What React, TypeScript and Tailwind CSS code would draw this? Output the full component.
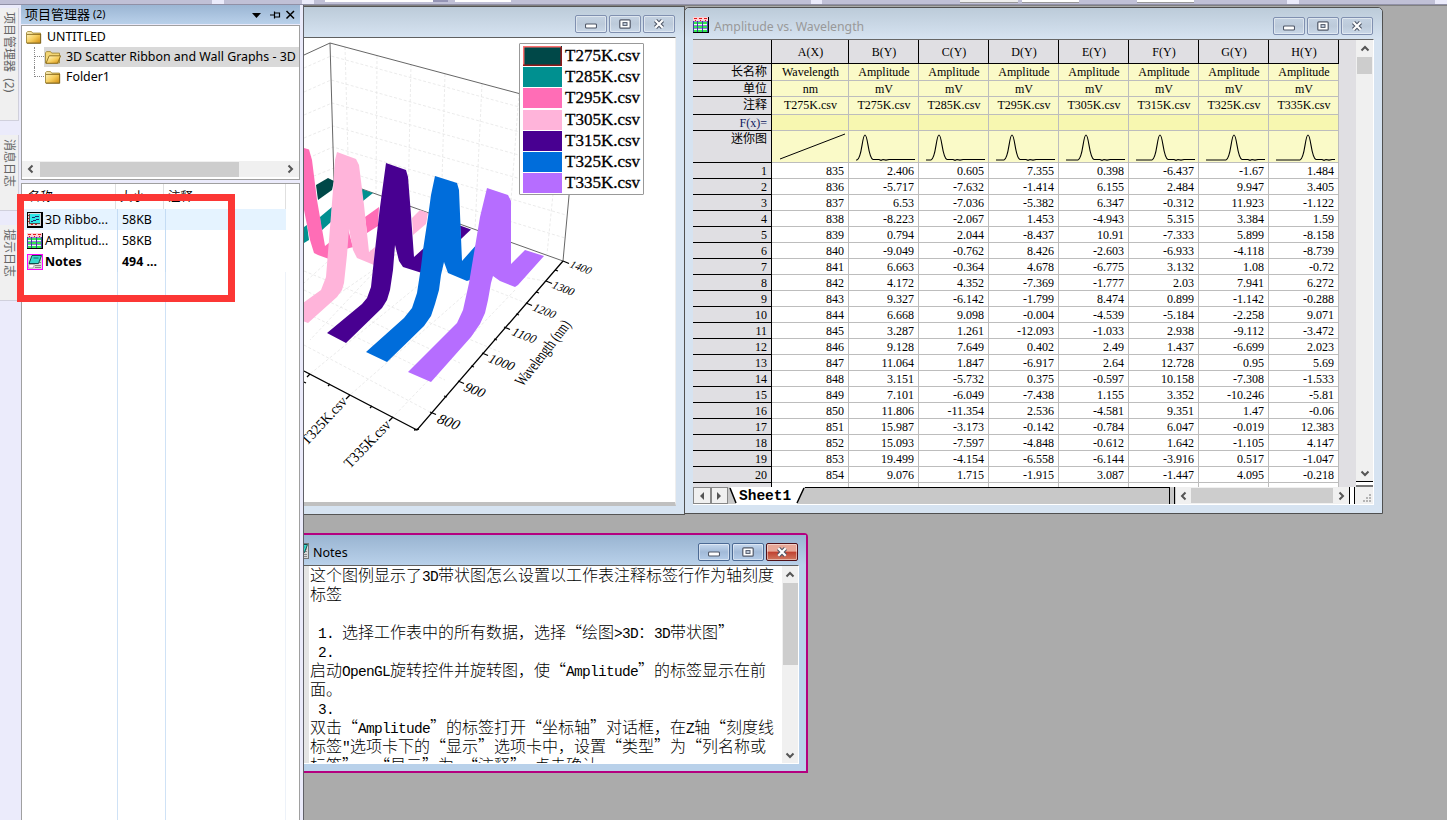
import React from 'react';

const UI = "font-['Noto_Sans','Noto_Sans_CJK_SC',sans-serif]";
const SERIF = "font-['Liberation_Serif','Noto_Sans_CJK_SC',serif]";

function GraphIcon() {
  return (
    <svg viewBox="0 0 16 16" className="h-4 w-4 shrink-0" shapeRendering="crispEdges">
      <rect width="16" height="16" fill="#000" />
      <rect x="1" y="1" width="13" height="13" fill="#d8d8d8" />
      <rect x="3" y="2" width="10" height="9" fill="#30e8e8" />
      <path d="M2.500 2v9.500H13" stroke="#505050" fill="none" />
      <path d="M5 5.500h3M8 4.500h4M4 9.500h2M6 8.500h3M9 7.500h3" stroke="#1a2b70" fill="none" />
      <path d="M1 3.500h1M1 6.500h1M1 9.500h1M4 12.500h2M8 12.500h2" stroke="#d02020" />
    </svg>
  );
}

function SheetIcon() {
  return (
    <svg viewBox="0 0 16 16" className="h-4 w-4 shrink-0" shapeRendering="crispEdges">
      <rect width="16" height="16" fill="#000" />
      <rect width="15" height="15" fill="#e8fff0" />
      <path d="M1 6h13M1 10h13M1 13.500h13" stroke="#30e850" strokeWidth="2" />
      <rect width="15" height="4" fill="#ffd0d4" />
      <path d="M1 1.500h3M6 1.500h3M11 1.500h3M2 3.500h1M7 3.500h1M12 3.500h1" stroke="#e01818" />
      <path d="M0 4.500h15M0 8.500h15M0 11.500h15" stroke="#9a78d8" />
      <path d="M.5 4v11M4.500 4v11M9.500 4v11M14.500 4v11" stroke="#4040a0" />
    </svg>
  );
}

function NotesIcon({ boxed }: { boxed?: boolean }) {
  return (
    <svg viewBox="0 0 16 16" className="h-4 w-4 shrink-0">
      <rect x=".5" y=".5" width="15" height="15" fill="#d8d8d8" stroke={boxed ? '#f0f' : '#777'} />
      <path d="M8 11.500h6M8 13.500h6M12 6h2M12 8.500h2" stroke="#888" />
      <path d="M5 1.500h9.500l-3 8H2z" fill="#38d8cc" stroke="#083c3c" strokeWidth=".9" />
      <path d="M6.500 4h5" stroke="#106060" strokeWidth=".9" />
      <path d="M2 10.500h5.500L6 14H1.500z" fill="#fff" stroke="#999" strokeWidth=".7" />
    </svg>
  );
}

function Folder({ open, id }: { open?: boolean; id: string }) {
  return (
    <svg viewBox="0 0 16 13" className="h-[13px] w-4 shrink-0">
      <defs>
        <linearGradient id={id} x1="0" y1="0" x2="1" y2="1">
          <stop offset="0" stopColor="#fffbd0" />
          <stop offset=".55" stopColor="#f6cd5c" />
          <stop offset="1" stopColor="#d08c10" />
        </linearGradient>
      </defs>
      <path d="M.5 12V1.800L1.500.6h4l1.200 1.500h7.800V12z" fill={open ? '#f3d676' : `url(#${id})`} stroke="#a08838" strokeWidth=".9" />
      {open ? (
        <path d="M1 12.300 4.200 4.800h11.400L12.600 12.300z" fill={`url(#${id})`} stroke="#8a6a18" strokeWidth=".9" />
      ) : (
        <path d="M1 3.400h13.500M14.700 3v9.300H1" fill="none" stroke="#7a5a10" strokeWidth=".8" />
      )}
    </svg>
  );
}

function Chevron({ dir, className = '' }: { dir: 'l' | 'r' | 'u' | 'd'; className?: string }) {
  const d = { l: 'M6.500 1.500 3 5l3.500 3.500', r: 'M3.500 1.500 7 5 3.500 8.500', u: 'M1.500 6.500 5 3l3.500 3.500', d: 'M1.500 3.500 5 7l3.500-3.500' }[dir];
  return (
    <svg viewBox="0 0 10 10" className={'h-[10px] w-[10px] shrink-0 ' + className}>
      <path d={d} fill="none" stroke="#555" strokeWidth="2" />
    </svg>
  );
}

function WinButtons({ active }: { active?: boolean }) {
  const face = active
    ? 'border-[#4c6a94] bg-linear-to-b from-[#c6d8ee] via-[#a2bad8] to-[#b4cce8]'
    : 'border-[#8090b0] bg-linear-to-b from-[#c4d2e2] via-[#bccada] to-[#cad8e8]';
  const base = 'flex h-[18px] w-8 items-center justify-center rounded-[2px] border shadow-[inset_0_0_0_1px_rgba(255,255,255,.45)] ';
  return (
    <div className="flex gap-[2px]">
      <div className={base + face}>
        <svg viewBox="0 0 12 10" className="h-[10px] w-3"><rect x=".5" y="5" width="11" height="4" rx="1" fill="#fff" stroke="#505868" strokeWidth="1.100" /></svg>
      </div>
      <div className={base + face}>
        <svg viewBox="0 0 12 10" className="h-[10px] w-3"><rect x=".8" y=".8" width="10.400" height="8.400" rx="1" fill="#fff" stroke="#505868" strokeWidth="1.200" /><rect x="4" y="3.600" width="4" height="2.800" fill="#c8d4e4" stroke="#505868" /></svg>
      </div>
      <div className={base + (active ? 'border-[#501018] bg-linear-to-b from-[#e8a898] from-45% via-[#c04030] via-50% to-[#d07860]' : face)}>
        <svg viewBox="0 0 12 10" className="h-[10px] w-3">
          <path d="M2.500 1.500 9.500 8.500M9.500 1.500 2.500 8.500" stroke="#505868" strokeWidth="4.300" />
          <path d="M2.300 1.300 9.700 8.700M9.700 1.300 2.300 8.700" stroke="#fff" strokeWidth="2.200" />
        </svg>
      </div>
    </div>
  );
}

function TopStrip() {
  return (
    <div className="flex h-[5px] w-full items-start overflow-hidden border-b border-[#9090a6] bg-[#c0c0d6]">
      <div className="ml-[212px] h-1 w-3 bg-[#ebebfb]" />
      <div className="ml-[78px] h-1 w-3 bg-[#ebebfb]" />
      <div className="ml-[11px] h-[2px] w-[108px] bg-white" />
      <div className="h-[2px] w-[15px] bg-[#9494b4]" />
      <div className="ml-[7px] h-[2px] w-[56px] bg-white" />
      <div className="ml-[300px] h-1 w-3 bg-[#ebebfb]" />
      <div className="ml-[138px] h-[3px] w-[58px] border-b border-[#999] bg-[#eee]" />
      <div className="ml-1 h-[3px] w-[57px] border-b border-[#999] bg-white" />
      <div className="ml-[58px] h-[3px] w-[57px] border-b border-[#999] bg-white" />
      <div className="ml-[93px] h-1 w-3 bg-[#ebebfb]" />
      <div className="ml-[136px] h-1 w-3 bg-[#ebebfb]" />
    </div>
  );
}

function DockTabs() {
  const tab = 'flex w-[19px] items-center border-r border-b border-[#d0d0dc] bg-[#f0f0f0] text-[12px] leading-none text-[#666] [writing-mode:vertical-rl] [text-orientation:sideways] whitespace-pre pt-1 pr-px ';
  return (
    <div className={'flex h-full w-[21px] shrink-0 flex-col bg-[#ebebfb] ' + UI}>
      <div className={tab + 'mt-[3px] h-[113px]'}>项目管理器  (2)</div>
      <div className={tab + 'mt-[14px] h-[76px]'}>消息日志</div>
      <div className={tab + 'mt-[14px] h-[76px]'}>提示日志</div>
    </div>
  );
}

const files = [
  { name: '3D Ribbo...', size: '58KB', icon: <GraphIcon />, row: 'bg-[#e5f3ff]' },
  { name: 'Amplitud...', size: '58KB', icon: <SheetIcon />, row: '' },
  { name: 'Notes', size: '494 ...', icon: <NotesIcon boxed />, row: 'font-bold' },
];

function ProjectPanel() {
  return (
    <div className={'flex h-full w-[283px] shrink-0 flex-col border-r border-[#606068] bg-[#ebebfb] pr-[3px] text-[12.400px] text-black ' + UI}>
      <div className="flex h-[19px] items-center bg-linear-to-b from-[#9bb5d3] to-[#b9d1ea] pr-[4px] pl-1">
        <span className="text-[13px]">项目管理器</span>
        <span className="ml-[3px] flex-1 text-[10.500px]">(2)</span>
        <svg viewBox="0 0 46 12" className="h-3 w-[46px]">
          <path d="M2 4h9l-4.500 5z" fill="#000" />
          <path d="M20 6h4M24.500 2.500v7M25 4h4.500v4H25" fill="none" stroke="#000" strokeWidth="1.200" />
          <path d="M36.500 2 44 9.500M44 2 36.500 9.500" stroke="#000" strokeWidth="1.500" />
        </svg>
      </div>
      <div className="mt-[1px] flex h-[155px] flex-col border border-[#a0a0a0] bg-white pt-[1px]">
        <div className="flex h-5 items-center gap-[5px] pl-[4px]"><Folder id="f1" />UNTITLED</div>
        <div className="flex h-5">
          <div className="ml-3 w-[10px] border-l border-dotted border-[#888]"><div className="h-[10px] border-b border-dotted border-[#888]" /></div>
          <div className="flex flex-1 items-center gap-[5px] overflow-hidden bg-[#d9d9d9] pl-px whitespace-nowrap"><Folder open id="f2" />3D Scatter Ribbon and Wall Graphs - 3D</div>
        </div>
        <div className="flex h-5">
          <div className="ml-3 w-[10px]"><div className="h-[10px] border-b border-l border-dotted border-[#888]" /></div>
          <div className="flex items-center gap-[5px] pl-px"><Folder id="f3" />Folder1</div>
        </div>
        <div className="flex-1" />
        <div className="mb-[2px] flex h-4 items-center bg-[#f0f0f0] px-1">
          <Chevron dir="l" />
          <div className="ml-1 h-[15px] w-[199px] bg-[#cdcdcd]" />
          <div className="flex-1" />
          <Chevron dir="r" />
        </div>
      </div>
      <div className="mt-[3px] flex flex-1 flex-col border border-b-0 border-[#a0a0a0] bg-white">
        <div className="flex h-[25px] items-start leading-[20px] [&>div]:pt-[3px]">
          <div className="h-full w-[94px] border-r border-[#e0e0e0] pl-1.5">名称</div>
          <div className="h-full w-12 border-r border-[#e0e0e0] pl-1">大小</div>
          <div className="h-full w-[122px] border-r border-[#e0e0e0] pl-1">注释</div>
        </div>
        {files.map((f) => (
          <div key={f.name} className={'flex h-[21px] w-[264px] items-center ' + f.row}>
            <div className="flex h-full w-[96px] items-center gap-[2px] border-r border-[#c4dcf4] pl-[5px] whitespace-nowrap">{f.icon}<span className="pt-[2px]">{f.name}</span></div>
            <div className="flex h-full w-12 items-center border-r border-[#c4dcf4] pt-[2px] pl-1 whitespace-nowrap">{f.size}</div>
          </div>
        ))}
        <div className="flex w-[264px] flex-1 border-r border-[#edf2f9]">
          <div className="w-[96px] border-r border-[#cfe2f6]" />
          <div className="w-12 border-r border-[#cfe2f6]" />
        </div>
      </div>
    </div>
  );
}

const series = [
  ['T275K.csv', '#004848'],
  ['T285K.csv', '#009090'],
  ['T295K.csv', '#ff6db6'],
  ['T305K.csv', '#ffb4da'],
  ['T315K.csv', '#480091'],
  ['T325K.csv', '#006ddb'],
  ['T335K.csv', '#b66dff'],
];

const ribbons: [string, string][] = [
  ['#004848', '316,185 328,178 334,181 332,190 318,200'],
  ['#009090', '320,217 332,207 331,222 321,231'],
  ['#009090', '304,227 307,225 309,240 304,243'],
  ['#009090', '361,189 373,193 363,201'],
  ['#ff6db6', '365,217 379,207 378,226 367,233'],
  ['#ff6db6', '348,229 353,247 346,249'],
  ['#ff6db6', '304,148 309,149.500 312,160 317,200 325,246 330,242 329,259 318,255 314,253 310,240 304,210'],
  ['#ffb4da', '412,218 420,210 428,213 426,224 413,235'],
  ['#ffb4da', '337,152 356,159 359,165 364,205 369,252 375,247 374,265 357,258 353,250 349,229 347,255 344,283 342,290 337,297 308,323 303,321 303,303 321,290 326,277 329,240 333,190 335,160'],
  ['#480091', '460,225.500 471,229.500 461,239'],
  ['#480091', '386,163 406,170 408,177 411,215 414,257 424,248 422,273 403,267 399,261 395,245 393,270 390,290 387,300 382,308 346,343 327,333 362,304 367,298 371,287 375,250 380,207'],
  ['#006ddb', '435,176 457,183 459,190 462,261 478,243 472,279 467,281 448,273 444,262 441,275 439,290 435,304 431,316 424,326 387,362 366,352 404,318 412,308 417,293 421,267 423,250 428,217 431,195'],
  ['#b66dff', '487,188 508,195 511,201 511,264 525,250 544,256 518,285 515,287 500,281 493,276 491,283 488,300 485,313 480,324 471,337 431,382 408,372 432,348 457,323 463,310 469,283 474,253 480,217'],
];

const scale: [number, number, number, number, string, number][] = [
  [563, 261, 581, 267.500, '1400', 11],
  [546, 281, 563.500, 288.500, '1300', 11.300],
  [526, 303, 544.500, 311, '1200', 11.800],
  [504, 327, 524.500, 335.500, '1100', 12.500],
  [482, 353, 502, 362.500, '1000', 13.200],
  [458, 381, 475, 390, '900', 14],
  [430, 412, 449, 422, '800', 15],
];

function RibbonChart() {
  return (
    <svg viewBox="304 38 371 464" className="h-[464px] w-[371px] font-['Liberation_Serif',serif]">
      <g stroke="#e6e6e6" strokeWidth=".8" strokeDasharray="3 2" fill="none">
        <path d="M345 47 348 155M377 56 376 195M411 64 408 205M445 74 441 217M482 84 475 230M519 93 508 241M562 104 547 254" />
        <path d="M304 68 331 56 571 121M304 92 331 80 570 146M304 115 332 103 569 169M304 138 333 126 567 192M304 160 333 147 566 215M304 180 334 168 565 238" />
        <path d="M304 271 416 317 500 352M304 290 460 363M304 312 445 380M304 345 430 412M340 245 545 281M380 245 526 303" />
        <path d="M335 255 304 283M376 270 310 340M425 280 310 374M470 290 350 395M515 290 393 417M395 255 330 300" />
      </g>
      <g stroke="#555" strokeWidth=".9" fill="none">
        <path d="M304 55 330 43 577 109M330 43 334 181M577 109 563 261M334 179 563 261" />
      </g>
      {ribbons.map(([c, p], i) => <polygon key={i} points={p} fill={c} />)}
      <g stroke="#000" fill="none" strokeWidth="1.300">
        <path d="M304 371 417 430 563 261" />
        <path d="M310 374l-3 3M350 395l-4 4M393 417l-4 4M330 384l-2 2M372 406l-2 2M304 382l2 1M414 430l5-1" />
        {scale.map(([x, y]) => <path key={y} d={`M${x} ${y}l6 2.500`} />)}
        <path d="M555 270l3 1M536 292l3 1M516 314l3 1M494 339l3 1M471 366l3 1M444 396l3 1" />
      </g>
      {scale.map(([, , x, y, t, s]) => (
        <text key={t} transform={`translate(${x} ${y}) rotate(21) skewX(-14)`} fontSize={s} textAnchor="middle" dy=".33em">{t}</text>
      ))}
      <text transform="translate(523 387) rotate(-52) skewX(4)" fontSize="16.500" textLength="79" lengthAdjust="spacingAndGlyphs">Wavelength (nm)</text>
      <text transform="translate(307 446) rotate(-47)" fontSize="14.500" textLength="60" lengthAdjust="spacingAndGlyphs">T325K.csv</text>
      <text transform="translate(350 469) rotate(-46)" fontSize="15" textLength="60" lengthAdjust="spacingAndGlyphs">T335K.csv</text>
    </svg>
  );
}

function GraphWindow() {
  return (
    <div className="absolute top-0 -left-10 flex h-[509px] w-[421px] flex-col border border-[#555] bg-[#d6e3f1] pr-2 pb-2">
      <div className="-mr-2 flex h-[30px] items-start justify-end bg-linear-to-b from-[#bccbd9] to-[#d6e3f1] pt-[8px] pr-[9px]"><WinButtons /></div>
      <div className="relative ml-[39px] flex flex-1 flex-col border-t border-r border-b-[4px] border-t-[#606060] border-r-[#eee] border-b-[#c0c0c0] bg-white">
        <RibbonChart />
        <div className={'absolute top-[5px] left-[215px] flex h-[152px] w-[125px] flex-col gap-[1.200px] rounded-[1px] border border-[#999] bg-white pt-[2px] pl-[3px] ' + SERIF}>
          {series.map(([name, color], i) => (
            <div key={name} className="flex h-5 shrink-0 items-center gap-[3px]">
              <svg viewBox="0 0 39 20" className="h-5 w-[39px]">
                <rect width="39" height="20" fill={color} />
                {i === 0 && <path d="M.7 19V.7H38" fill="none" stroke="#ff7070" strokeWidth="1.500" />}
                {i === 0 && <path d="M38.200 1v18.300H0" fill="none" stroke="#901818" strokeWidth="1.500" />}
              </svg>
              <span className="text-[17px] leading-5 text-black [-webkit-text-stroke:0.3px_#000]">{name}</span>
            </div>
          ))}
        </div>
      </div>
    </div>
  );
}

const rows = `835 2.406 0.605 7.355 0.398 -6.437 -1.67 1.484
836 -5.717 -7.632 -1.414 6.155 2.484 9.947 3.405
837 6.53 -7.036 -5.382 6.347 -0.312 11.923 -1.122
838 -8.223 -2.067 1.453 -4.943 5.315 3.384 1.59
839 0.794 2.044 -8.437 10.91 -7.333 5.899 -8.158
840 -9.049 -0.762 8.426 -2.603 -6.933 -4.118 -8.739
841 6.663 -0.364 4.678 -6.775 3.132 1.08 -0.72
842 4.172 4.352 -7.369 -1.777 2.03 7.941 6.272
843 9.327 -6.142 -1.799 8.474 0.899 -1.142 -0.288
844 6.668 9.098 -0.004 -4.539 -5.184 -2.258 9.071
845 3.287 1.261 -12.093 -1.033 2.938 -9.112 -3.472
846 9.128 7.649 0.402 2.49 1.437 -6.699 2.023
847 11.064 1.847 -6.917 2.64 12.728 0.95 5.69
848 3.151 -5.732 0.375 -0.597 10.158 -7.308 -1.533
849 7.101 -6.049 -7.438 1.155 3.352 -10.246 -5.81
850 11.806 -11.354 2.536 -4.581 9.351 1.47 -0.06
851 15.987 -3.173 -0.142 -0.784 6.047 -0.019 12.383
852 15.093 -7.597 -4.848 -0.612 1.642 -1.105 4.147
853 19.499 -4.154 -6.558 -6.144 -3.916 0.517 -1.047
854 9.076 1.715 -1.915 3.087 -1.447 4.095 -0.218
855 16.716 4.399 -1.64 -3.968 -5.466 2.684 -2.693`.split('\n').map((r) => r.split(' '));

const cols = ['A(X)', 'B(Y)', 'C(Y)', 'D(Y)', 'E(Y)', 'F(Y)', 'G(Y)', 'H(Y)'];
const peaks = [0, 15, 19, 22, 26, 30, 34, 38];
const grid = 'grid grid-cols-[79px_77px_repeat(7,70px)] grid-rows-[100%] ';

function MetaRow({ label, values, height, tone = 'bg-[#fafac8]', labelTone = '' }: { label: string; values: React.ReactNode[]; height: string; tone?: string; labelTone?: string }) {
  return (
    <div className={grid + height}>
      <div className={'flex min-h-0 items-start justify-end border-r border-b border-black bg-[#e0dfe3] pr-1 leading-[17px] ' + labelTone}>{label}</div>
      {values.map((v, i) => (
        <div key={i} className={'flex min-h-0 items-start justify-center overflow-hidden border-r border-b border-[#bdbdbd] pl-px leading-[17px] ' + tone}>{v}</div>
      ))}
    </div>
  );
}

function Sparkline({ i }: { i: number }) {
  if (i === 0) return <svg viewBox="0 0 76 31" className="h-[31px] w-[76px] shrink-0"><path d="M7 28 72 3" stroke="#000" fill="none" /></svg>;
  const p = peaks[i];
  return (
    <svg viewBox="0 0 69 31" className="h-[31px] w-[69px] shrink-0">
      <path d={`M6 29H${p - 8}C${p - 3} 28 ${p - 3} 4 ${p} 4S${p + 3} 27 ${p + 8} 28.500H${p + 14}l2 .8 2-.8 3 .6 3-.6H65`} fill="none" stroke="#000" strokeWidth="1.100" />
    </svg>
  );
}

function SheetWindow() {
  return (
    <div className="absolute top-[1px] left-[380px] flex h-[507px] w-[699px] flex-col rounded-t-[5px] border border-[#505050] bg-[#d6e3f1] px-2 pb-2">
      <div className="-mx-2 flex h-[31px] shrink-0 items-start rounded-t-[5px] bg-linear-to-b from-[#bccbd9] to-[#d6e3f1] pt-[9px] pr-[9px] pl-[8px]">
        <SheetIcon />
        <span className={'ml-[5px] flex-1 text-[12.300px] leading-[20px] text-[#999] ' + UI}>Amplitude vs. Wavelength</span>
        <WinButtons />
      </div>
      <div className="flex min-h-0 flex-1 flex-col border-t border-r border-b border-t-[#666] border-r-white border-b-white">
        <div className="flex h-[447px] shrink-0">
          <div className={'w-[646px] overflow-hidden text-[12px] text-black ' + SERIF}>
            <div className={grid + 'h-6'}>
              {['', ...cols].map((c, i) => (
                <div key={i} className="flex items-center justify-center border-r border-b border-black bg-[#e0dfe3] pl-px">{c}</div>
              ))}
            </div>
            <MetaRow label="长名称" height="h-[17px]" values={cols.map((_, i) => (i ? 'Amplitude' : 'Wavelength'))} />
            <MetaRow label="单位" height="h-4" values={cols.map((_, i) => (i ? 'mV' : 'nm'))} />
            <MetaRow label="注释" height="h-[18px]" values={['T275K.csv', ...series.map((s) => s[0])]} />
            <MetaRow label="F(x)=" height="h-4" values={cols.map(() => '')} tone="bg-[#f7f7b0]" labelTone="text-[#102060]" />
            <MetaRow label="迷你图" height="h-8" values={cols.map((_, i) => <Sparkline i={i} />)} />
            {rows.map((r, n) => (
              <div key={n} className={grid + 'h-4 text-right leading-[17px]'}>
                <div className="min-h-0 border-r border-b border-black bg-[#e0dfe3] pr-1">{n + 1}</div>
                {r.map((v, i) => (
                  <div key={i} className="min-h-0 border-r border-b border-[#bdbdbd] bg-white pr-1">{v}</div>
                ))}
              </div>
            ))}
          </div>
          <div className="w-[17px] bg-[#e0dfe3]" />
          <div className="flex flex-1 flex-col items-center bg-[#f0f0f0]">
            <Chevron dir="u" className="mt-1" />
            <div className="mt-[3px] h-[17px] w-[15px] bg-[#cdcdcd]" />
            <div className="flex-1" />
            <Chevron dir="d" className="mb-[3px]" />
            <div className="flex h-[6px] w-full flex-col justify-end border-t border-black bg-white"><div className="h-[2px] bg-[#777]" /></div>
          </div>
        </div>
        <div className="flex min-h-0 flex-1 bg-[#c8c8c8]">
          {(['l', 'r'] as const).map((d) => (
            <div key={d} className="flex w-[17.500px] items-center justify-center border border-[#888] bg-[#f0f0f0]">
              <svg viewBox="0 0 8 8" className="h-2 w-2"><path d={d === 'l' ? 'M6 0v8L2 4z' : 'M2 0v8l4-4z'} fill="#555" /></svg>
            </div>
          ))}
          <div className="relative flex w-[77px] items-center">
            <svg viewBox="0 0 77 17" preserveAspectRatio="none" className="absolute inset-0 h-full w-[77px]"><path d="M2 0 8 17H69L76 0z" fill="#fff" /><path d="M2 1 8 16M69 16 76 1" stroke="#000" strokeWidth="1.500" /></svg>
            <span className="relative pl-[11px] font-['Liberation_Mono',monospace] text-[14.500px] leading-4 font-bold text-black">Sheet1</span>
          </div>
          <div className="w-[365px] border-t border-r border-black" />
          <div className="mr-px ml-1 w-px bg-black" />
          <div className="flex w-[173px] items-center bg-[#f0f0f0] px-[3px]">
            <Chevron dir="l" />
            <div className="ml-[2px] h-[15px] w-[142px] bg-[#cdcdcd]" />
            <div className="flex-1" />
            <Chevron dir="r" />
          </div>
          <div className="w-[6px] border-x border-black bg-white" />
          <div className="flex flex-1 items-end justify-end bg-[#f0f0f0] p-[2px]">
            <svg viewBox="0 0 8 8" className="h-2 w-2" fill="#b4b4b4"><path d="M6 0h2v2H6zM3 3h2v2H3zM6 3h2v2H6zM0 6h2v2H0zM3 6h2v2H3zM6 6h2v2H6z" /></svg>
          </div>
        </div>
      </div>
    </div>
  );
}

const notes = [
  '这个图例显示了3D带状图怎么设置以工作表注释标签行作为轴刻度',
  '标签',
  '',
  ' 1. 选择工作表中的所有数据，选择“绘图>3D：3D带状图”',
  ' 2.',
  '启动OpenGL旋转控件并旋转图，使“Amplitude”的标签显示在前',
  '面。',
  ' 3.',
  '双击“Amplitude”的标签打开“坐标轴”对话框，在Z轴“刻度线',
  '标签"选项卡下的“显示”选项卡中，设置“类型”为“列名称或',
  '标签”， “显示”为 “注释”，点击确认',
];

function NotesWindow() {
  return (
    <div className="absolute top-[527px] -left-10 flex h-[240px] w-[544px] flex-col rounded-tr-[4px] border-2 border-[#b4007f] bg-[#b9d1ea] pr-[7px] pb-[7px]">
      <div className="-mr-[7px] flex h-[30px] shrink-0 items-start bg-linear-to-b from-[#99b4d1] to-[#b9d1ea] pt-[8px] pr-[8px] pl-[27px]">
        <NotesIcon />
        <span className={'ml-1 flex-1 text-[12.500px] leading-[20px] text-black ' + UI}>Notes</span>
        <WinButtons active />
      </div>
      <div className="ml-[38px] flex min-h-0 flex-1 border-t border-r border-b border-t-[#606060] border-r-white border-b-white bg-white">
        <div className="w-[5px] bg-[#e4e4e4]" />
        <div className="flex-1 overflow-hidden pl-px font-['Noto_Sans_CJK_SC',sans-serif] text-[16px] leading-[17px] font-light text-black">
          {notes.map((line, i) => (
            <div key={i} className="h-[19px] whitespace-pre">
              {line.split(/([\x20-\x7e]+)/).map((part, j) => (
                <span key={j} className={j % 2 ? "font-['Liberation_Mono',monospace] text-[14.500px] tracking-[-0.700px]" : ''}>{part}</span>
              ))}
            </div>
          ))}
        </div>
        <div className="flex w-4 flex-col items-center bg-[#f0f0f0]">
          <Chevron dir="u" className="mt-1" />
          <div className="mt-[3px] h-[82px] w-[15px] bg-[#cdcdcd]" />
          <div className="flex-1" />
          <Chevron dir="d" className="mb-[3px]" />
        </div>
      </div>
    </div>
  );
}

export default function App() {
  return (
    <div className="relative flex h-[820px] w-[1447px] flex-col overflow-hidden bg-[#ababab]">
      <TopStrip />
      <div className="flex min-h-0 flex-1">
        <DockTabs />
        <ProjectPanel />
        <div className="relative min-w-0 flex-1 overflow-hidden border-t border-[#808080]">
          <GraphWindow />
          <SheetWindow />
          <NotesWindow />
        </div>
      </div>
      <div className="pointer-events-none absolute top-[194px] left-[17px] h-[108px] w-[218px] border-[7px] border-[#fc3735]" />
    </div>
  );
}
